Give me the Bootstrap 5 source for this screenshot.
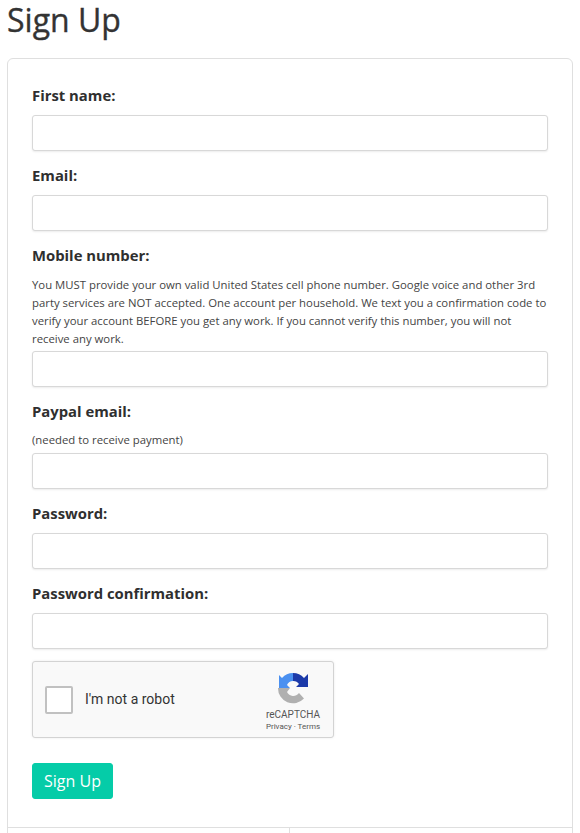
<!DOCTYPE html>
<html lang="en">
<head>
<meta charset="utf-8">
<title>Sign Up</title>
<link href="https://cdn.jsdelivr.net/npm/bootstrap@5.3.0/dist/css/bootstrap.min.css" rel="stylesheet">
<style>
html,body{height:833px;overflow:hidden;}
body{font-family:"Open Sans","Noto Sans",sans-serif;color:#333;background:#fff;font-size:14.4px;}
.page-wrap{padding:0 7px;}
.page-title{font-size:32px;line-height:40px;font-weight:400;-webkit-text-stroke:.35px #333;margin:0 0 18px;color:#333;}
.signup-card{border:1px solid #dfdfdf;border-radius:6px;}
.signup-body{padding:24px 24px 28px;}
.field-block{margin-bottom:12px;}
.field-label{display:block;font-weight:700;font-size:14.85px;line-height:24px;margin:0 0 8px;color:#2f2f2f;}
.field-help{font-size:11.35px;line-height:18px;color:#444;padding-top:1px;margin:0 0 3px;}
.field-help.one{padding-top:0;margin:0 0 4px;}
.field-input{height:36px;border:1px solid #d8d8d8;border-radius:3px;box-shadow:0 1px 2px rgba(0,0,0,.08);}
.captcha-box{width:302px;height:77px;background:#f9f9f9;border:1px solid #d3d3d3;border-radius:3px;box-shadow:0 0 3px rgba(0,0,0,.08);font-family:Roboto,sans-serif;padding:0 6px 0 12px;margin-bottom:25px;}
.captcha-check{width:28px;height:28px;background:#fff;border:2px solid #c1c1c1;border-radius:2px;margin-right:12px;}
.captcha-text{font-size:14px;color:#333;}
.captcha-brand{width:68px;margin-top:10px;color:#555;line-height:1;}
.captcha-name{font-size:10px;margin-top:5px;line-height:12px;}
.captcha-links{font-size:8px;margin-top:1px;line-height:10px;}
.signup-btn{background:#05cca8;border:1px solid #05cca8;color:#fff;font-size:16px;line-height:22px;padding:6px 11px;border-radius:3px;}
.signup-btn:hover{background:#04b595;color:#fff;border-color:#04b595;}
.card-foot{border-top:1px solid #dfdfdf;height:60px;}
.foot-first{flex:0 0 281px;height:100%;}
.foot-second{flex:1 1 0;height:100%;border-left:1px solid #dfdfdf;}
</style>
</head>
<body>
<div class="page-wrap">
  <h1 class="page-title">Sign Up</h1>
  <div class="signup-card bg-white">
    <form class="signup-body">
      <div class="field-block">
        <label class="field-label" for="f1">First name:</label>
        <input id="f1" class="form-control field-input" type="text">
      </div>
      <div class="field-block">
        <label class="field-label" for="f2">Email:</label>
        <input id="f2" class="form-control field-input" type="email">
      </div>
      <div class="field-block">
        <label class="field-label" for="f3">Mobile number:</label>
        <p class="field-help">You MUST provide your own valid United States cell phone number. Google voice and other 3rd party services are NOT accepted. One account per household. We text you a confirmation code to verify your account BEFORE you get any work. If you cannot verify this number, you will not receive any work.</p>
        <input id="f3" class="form-control field-input" type="tel">
      </div>
      <div class="field-block">
        <label class="field-label" for="f4">Paypal email:</label>
        <p class="field-help one">(needed to receive payment)</p>
        <input id="f4" class="form-control field-input" type="email">
      </div>
      <div class="field-block">
        <label class="field-label" for="f5">Password:</label>
        <input id="f5" class="form-control field-input" type="password">
      </div>
      <div class="field-block">
        <label class="field-label" for="f6">Password confirmation:</label>
        <input id="f6" class="form-control field-input" type="password">
      </div>
      <div class="captcha-box d-flex align-items-center">
        <div class="captcha-check"></div>
        <div class="captcha-text flex-grow-1">I'm not a robot</div>
        <div class="captcha-brand text-center align-self-start">
          <svg width="32" height="32" viewBox="0 0 32 32" class="d-block mx-auto">
            <path d="M1 16H13L10 20A7 7 0 0 0 22 21L27 26.500A15 15 0 0 1 1 16Z" fill="#b0b0b0"/>
            <path d="M16 1A15 15 0 0 0 5 6L2 3V16H13L10 13A7 7 0 0 1 16 9Z" fill="#4a90f0"/>
            <path d="M16 1A15 15 0 0 1 27 6L31 2V15H19L22 12A7 7 0 0 0 16 9Z" fill="#1c3aa9"/>
          </svg>
          <div class="captcha-name">reCAPTCHA</div>
          <div class="captcha-links">Privacy · Terms</div>
        </div>
      </div>
      <button type="button" class="btn signup-btn">Sign Up</button>
    </form>
    <div class="card-foot d-flex">
      <div class="foot-first"></div>
      <div class="foot-second"></div>
    </div>
  </div>
</div>
<script src="https://cdn.jsdelivr.net/npm/bootstrap@5.3.0/dist/js/bootstrap.bundle.min.js"></script>
</body>
</html>
